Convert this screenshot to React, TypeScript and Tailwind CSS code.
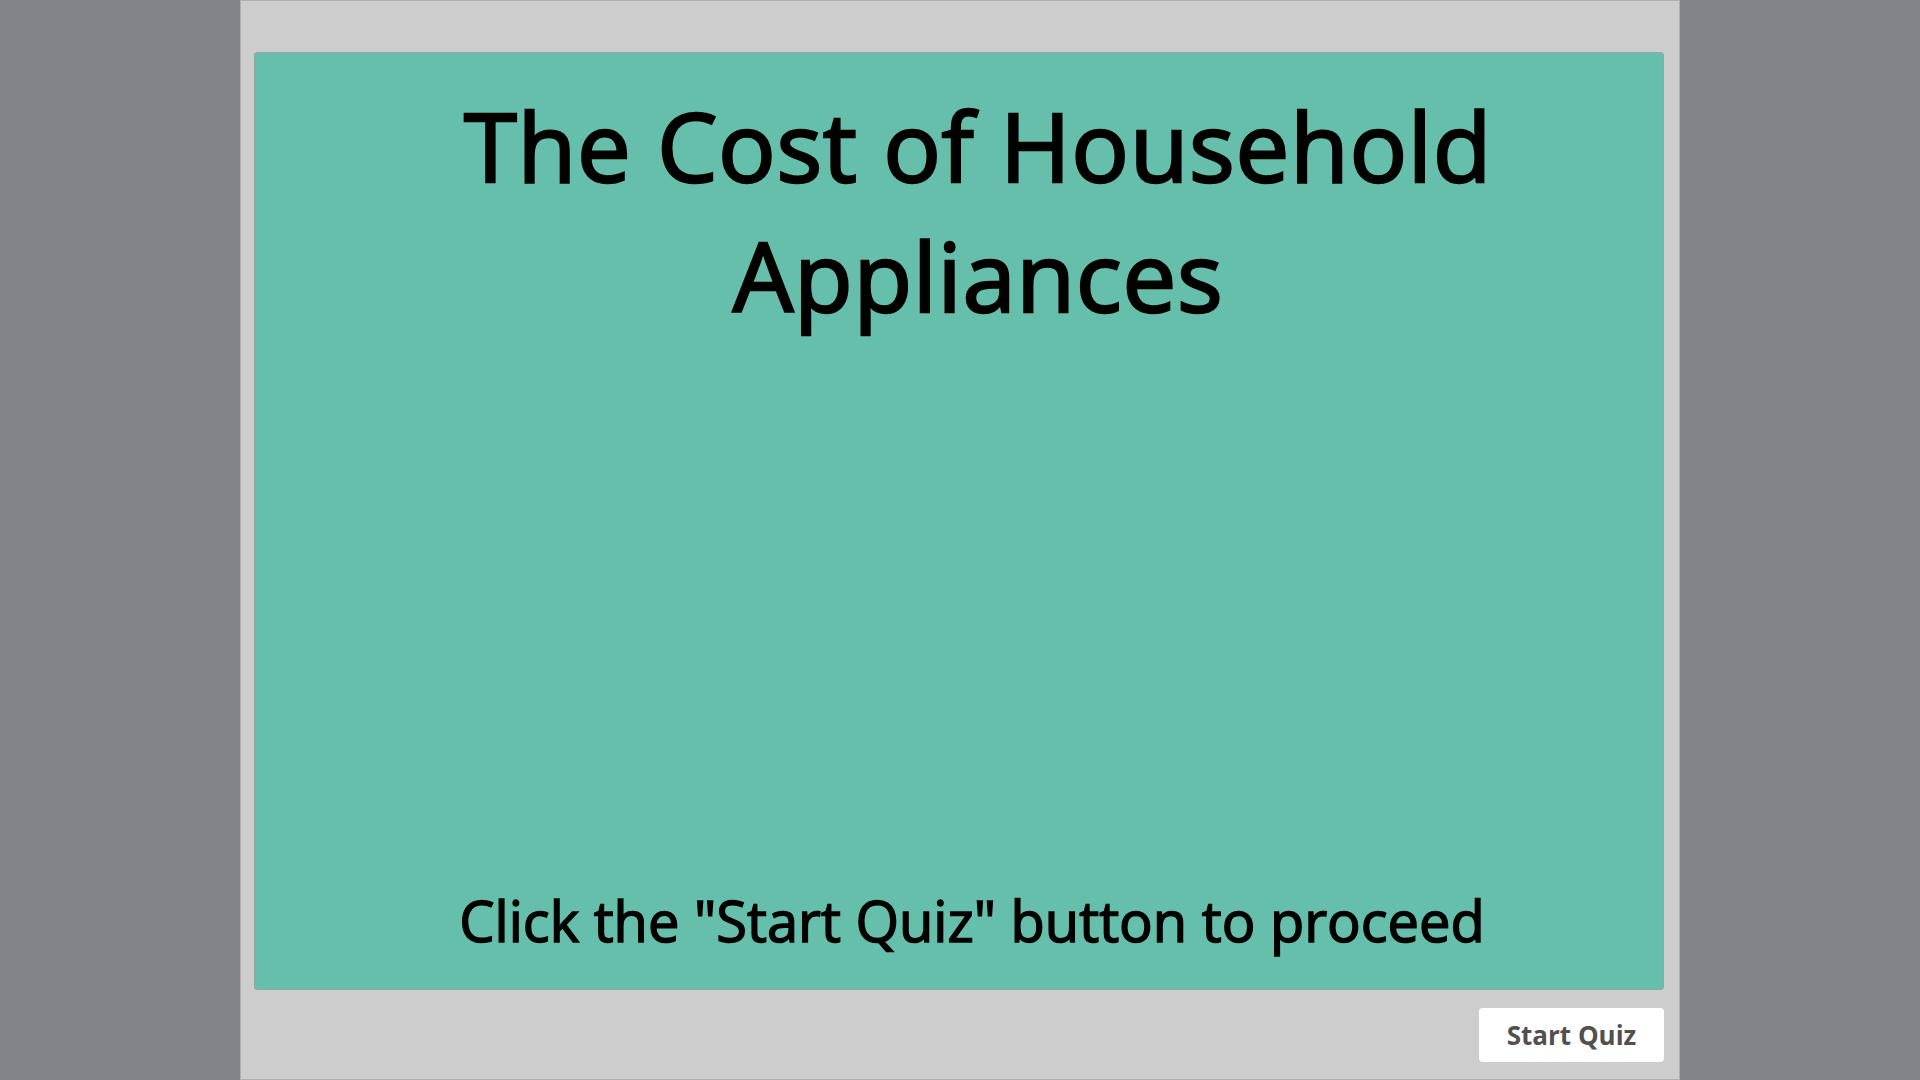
import React from "react";

export default function App() {
  return (
    <div className="w-[1920px] h-[1080px] bg-[#818589] flex justify-center overflow-hidden" style={{ fontFamily: '"Open Sans", "Liberation Sans", sans-serif' }}>
      <div className="w-[1440px] h-[1080px] bg-[#cdcdcd] border border-[#b0b0b0] flex flex-col">
        <div className="mt-[51px] ml-[13px] w-[1410px] h-[938px] bg-[#66bfab] border border-[#8fa8a2] rounded-[3px] flex flex-col justify-between items-center">
          <h1 className="pt-[27px] pl-[38px] w-[1100px] text-center text-[96px] leading-[130px] font-normal tracking-[0.6px] [-webkit-text-stroke:2.4px_black] text-black">
            The Cost of Household Appliances
          </h1>
          <p className="pb-[31px] pl-[26px] text-center text-[56px] leading-[76px] font-normal tracking-[0px] [-webkit-text-stroke:1.5px_black] text-black">
            Click the "Start Quiz" button to proceed
          </p>
        </div>
        <div className="flex justify-end mt-[18px] mr-[15px]">
          <button className="w-[185px] h-[54px] bg-white rounded-[4px] text-[26px] font-bold text-[#505050] flex items-center justify-center">
            Start Quiz
          </button>
        </div>
      </div>
    </div>
  );
}
